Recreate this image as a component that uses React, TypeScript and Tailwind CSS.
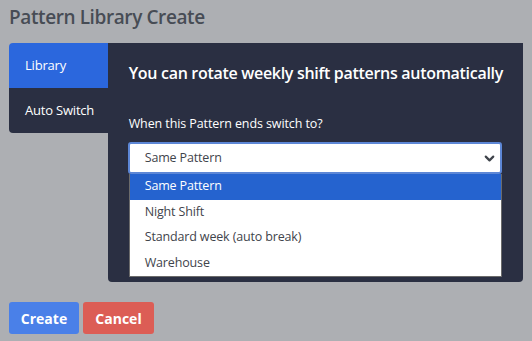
import { ChevronDown } from 'lucide-react';

const options = ['Same Pattern', 'Night Shift', 'Standard week (auto break)', 'Warehouse'];

export default function App() {
  return (
    <div
      className="w-[532px] h-[341px] bg-[#adafb3] px-[9px] overflow-hidden"
      style={{ fontFamily: '"Segoe UI", "Open Sans", "Noto Sans", sans-serif' }}
    >
      <h1 className="pt-[3px] h-[43px] text-[19px] leading-[28px] font-semibold tracking-[-0.4px] text-[#474c55]">
        Pattern Library Create
      </h1>

      <div className="flex w-[514px]">
        {/* tabs */}
        <div className="w-[101px] flex flex-col">
          <div className="h-[45px] rounded-tl-[4px] bg-[#2b67dd] text-white text-[13px] tracking-[-0.2px] pl-[16px] flex items-center">
            Library
          </div>
          <div className="h-[45px] rounded-bl-[4px] bg-[#2a2f42] text-white text-[13px] tracking-[-0.2px] pl-[16px] flex items-center">
            Auto Switch
          </div>
        </div>

        {/* panel */}
        <div className="flex-1 h-[239px] bg-[#2a2f42] rounded-b-[4px] pl-[21px] pr-[20px] pt-[18px]">
          <h2 className="whitespace-nowrap text-[16px] leading-[24px] font-semibold tracking-[-0.3px] text-white">
            You can rotate weekly shift patterns automatically
          </h2>
          <div className="mt-[30px] text-[12.5px] leading-[18px] tracking-[-0.1px] text-white">
            When this Pattern ends switch to?
          </div>
          <div className="mt-[9px] w-[374px] -ml-[1px]">
            <div className="h-[32px] rounded-[3px] border-2 border-[#5d87d6] bg-white flex items-center justify-between pl-[15px] pr-[3px] text-[12.5px] tracking-[-0.15px] text-[#3f444b]">
              <span>Same Pattern</span>
              <ChevronDown size={15} strokeWidth={3.5} className="text-[#3f444b]" />
            </div>
            <div className="ml-[1px] w-[373px] border border-t-0 border-[#6b6b6b] bg-white text-[12.5px] tracking-[-0.15px]">
              {options.map((o, i) => (
                <div
                  key={o}
                  className={`h-[25.5px] flex items-center pl-[15px] ${
                    i === 0 ? 'bg-[#2563cf] text-white' : 'text-[#3f444b]'
                  }`}
                >
                  {o}
                </div>
              ))}
            </div>
          </div>
        </div>
      </div>

      <div className="mt-[20px] flex gap-[4px]">
        <button className="w-[70px] h-[32px] rounded-[3px] bg-[#4a80e8] text-white text-[14px] font-bold">Create</button>
        <button className="w-[71px] h-[32px] rounded-[3px] bg-[#dc5d55] text-white text-[14px] font-bold">Cancel</button>
      </div>
    </div>
  );
}
